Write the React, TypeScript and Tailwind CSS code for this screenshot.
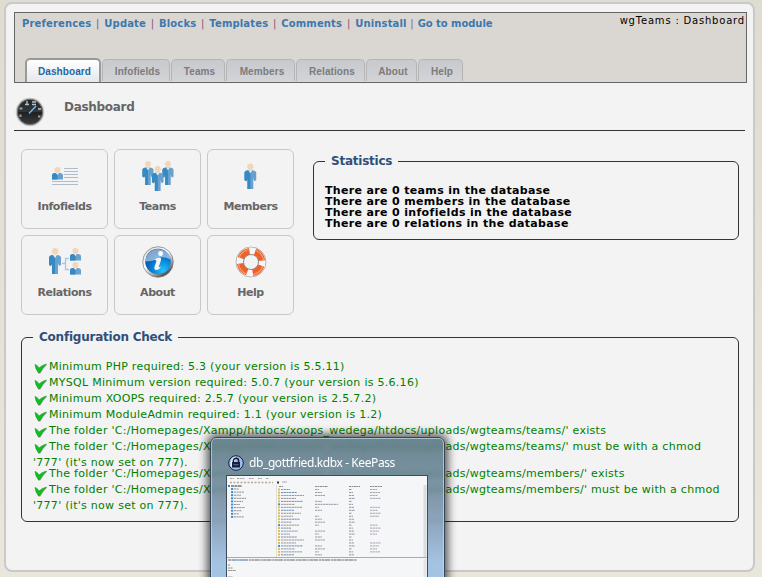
import { Fragment, type ReactNode } from "react";

const navLinks = ["Preferences", "Update", "Blocks", "Templates", "Comments", "Uninstall"];

const tabs = [
  { label: "Infofields", width: "w-[68px]" },
  { label: "Teams", width: "w-[54px]" },
  { label: "Members", width: "w-[69px]" },
  { label: "Relations", width: "w-[69px]" },
  { label: "About", width: "w-[51px]" },
  { label: "Help", width: "w-[45px]" },
];

function Person({ x, y, h = 26 }: { x: number; y: number; h?: number }) {
  return (
    <g transform={`translate(${x} ${y}) scale(${h / 26})`}>
      <path d="M1 9Q2 7 5 7H9Q12 7 13 9V17L11 18L10 15V26H4V15L3 18L1 17Z" fill="#69a0ce" />
      <path d="M1 9Q2 7 5 7L7 10V26H4V16L3 18L1 17Z" fill="#348ac1" />
      <circle cx="7" cy="3.3" r="3.2" fill="#f3d5b8" />
      <path d="M5 7H9L7 10Z" fill="#e4eef5" />
    </g>
  );
}

function Bust({ x, y }: { x: number; y: number }) {
  return (
    <g transform={`translate(${x} ${y})`}>
      <path d="M0 12.5V8.5Q0 6 3 6H8Q11 6 11 8.5V12.5Z" fill="#69a0ce" />
      <path d="M0 12.5V8.5Q0 6 3 6L5.5 8V12.5Z" fill="#348ac1" />
      <circle cx="5.5" cy="3" r="3" fill="#f3d5b8" />
      <path d="M4 6H7L5.5 8Z" fill="#e4eef5" />
    </g>
  );
}

function InfofieldsIcon() {
  return (
    <svg width="34" height="34" viewBox="0 0 34 34">
      <Bust x={4} y={7} />
      <path d="M16 8.5H30M16 11.5H30M16 14.5H30M16 17.5H30M4 21.5H30M4 24.5H30" stroke="#adbdce" />
    </svg>
  );
}

function TeamsIcon() {
  return (
    <svg width="34" height="34" viewBox="0 0 34 34">
      <Person x={0.5} y={1} h={24} />
      <Person x={20.5} y={1} h={24} />
      <Person x={10} y={6} h={25} />
    </svg>
  );
}

function MembersIcon() {
  return (
    <svg width="34" height="34" viewBox="0 0 34 34">
      <Person x={9.5} y={3.5} h={25.5} />
    </svg>
  );
}

function RelationsIcon() {
  return (
    <svg width="34" height="34" viewBox="0 0 34 34">
      <Person x={0} y={2} />
      <path d="M14 17.5H17.5M21 12.5H17.5V23.5H21" stroke="#a6c9e3" strokeWidth="1.3" fill="none" />
      <Bust x={22} y={2} />
      <Bust x={22} y={16} />
    </svg>
  );
}

function AboutIcon() {
  return (
    <svg width="34" height="34" viewBox="0 0 34 34">
      <defs>
        <linearGradient id="rim" x1="0" y1="0" x2="0.7" y2="1">
          <stop offset="0" stopColor="#d5d5d5" />
          <stop offset="0.5" stopColor="#ffffff" />
          <stop offset="0.8" stopColor="#9a9a9a" />
          <stop offset="1" stopColor="#3d3d3d" />
        </linearGradient>
        <radialGradient id="glass" cx="0.7" cy="0.85" r="0.9">
          <stop offset="0" stopColor="#20c4ff" />
          <stop offset="0.45" stopColor="#0a83d8" />
          <stop offset="1" stopColor="#083f93" />
        </radialGradient>
      </defs>
      <circle cx="17" cy="16" r="15.3" fill="url(#rim)" stroke="#777" strokeWidth="0.7" />
      <circle cx="17" cy="15.5" r="12.8" fill="url(#glass)" />
      <path d="M4.3 15.5A12.8 12.8 0 0 1 29.7 13.5Q22 9.5 17 12.5T4.3 15.5Z" fill="#ffffff" opacity="0.5" />
      <circle cx="19.6" cy="7.5" r="2.4" fill="#fff" />
      <path d="M13.5 13.7Q17 10.9 19.8 11.9Q20.6 12.5 19.6 15.5L17.7 21Q18.4 21.5 20 20.3Q18.5 24.1 15 24.1Q12.8 23.5 13.6 20.5L15.5 15Q15 14.3 13.5 13.7Z" fill="#f6f6f6" />
    </svg>
  );
}

function HelpIcon() {
  return (
    <svg width="34" height="34" viewBox="0 0 34 34" fill="none">
      <circle cx="17" cy="16" r="14.9" stroke="#96928e" strokeWidth="0.8" />
      <circle cx="17" cy="16" r="10.9" stroke="#f6f6f6" strokeWidth="7" />
      <circle cx="17" cy="16" r="10.9" stroke="#eb622d" strokeWidth="6.6" strokeDasharray="11.5 5.62" transform="rotate(20 17 16)" />
      <circle cx="17" cy="16" r="12.6" stroke="#ff9a6a" strokeWidth="1.2" strokeDasharray="13.3 6.49" transform="rotate(20 17 16)" />
      <circle cx="17" cy="16" r="7.5" stroke="#8a7a72" strokeWidth="0.9" />
    </svg>
  );
}

function GaugeIcon() {
  return (
    <svg className="shrink-0" width="30" height="30" viewBox="0 0 30 30">
      <defs>
        <linearGradient id="dial" x1="0" y1="0" x2="0" y2="1">
          <stop offset="0" stopColor="#20252a" />
          <stop offset="0.5" stopColor="#33373a" />
          <stop offset="0.52" stopColor="#202020" />
          <stop offset="1" stopColor="#3b3d3d" />
        </linearGradient>
      </defs>
      <circle cx="15" cy="15" r="14.3" fill="#c4c4c4" />
      <circle cx="15" cy="15" r="12.7" fill="url(#dial)" stroke="#747474" />
      <path d="M12 4V7.5M10 7.5H14M17 5H21M17 7.5H21" stroke="#b9bec0" strokeWidth="1.4" />
      <path d="M4.5 11.5H7.5M5.5 17.5V20M23 19.5H25.5M23 12H26" stroke="#9ca2a4" strokeWidth="2" />
      <path d="M14 16.5L21 9" stroke="#7dbdf0" strokeWidth="1.3" />
    </svg>
  );
}

function CheckIcon() {
  return (
    <svg className="mt-[3px] h-[12px] w-[14px] shrink-0" viewBox="0 0 14 12">
      <path d="M1.5 4L5 6.5Q9 3.4 13.2 2.6Q9 6 6.3 11.5L4.4 11.5Z" fill="#52644f" opacity="0.6" />
      <path d="M1 2.4L2.6 3.2Q4.2 4.2 5 6Q8 3 12.6 2Q8.4 5.6 5.6 10.6L4.2 10.6Q1.4 7 1 2.4Z" fill="#0cc41a" stroke="#158a1c" strokeWidth="0.5" />
    </svg>
  );
}

const cards: { label: string; icon: ReactNode }[] = [
  { label: "Infofields", icon: <InfofieldsIcon /> },
  { label: "Teams", icon: <TeamsIcon /> },
  { label: "Members", icon: <MembersIcon /> },
  { label: "Relations", icon: <RelationsIcon /> },
  { label: "About", icon: <AboutIcon /> },
  { label: "Help", icon: <HelpIcon /> },
];

function CheckRow({ children }: { children: string }) {
  return (
    <div className="flex h-4 items-start whitespace-nowrap">
      <span className="flex w-4 shrink-0 pl-px">
        <CheckIcon />
      </span>
      <span>{children}</span>
    </div>
  );
}

function Panel({ title, className, children }: { title: string; className: string; children: ReactNode }) {
  return (
    <fieldset className={`rounded-md border border-[#333] ${className}`}>
      <legend className="ml-[11px] h-4 px-[6px] text-[12px] leading-4 font-bold tracking-[-0.23px] text-[#2f4f7a]">{title}</legend>
      {children}
    </fieldset>
  );
}

const listRows = Array.from({ length: 23 }, (_, i) => i);

function Thumbnail() {
  return (
    <svg className="block" width="200" height="102" viewBox="0 0 200 102">
      <rect width="200" height="102" fill="#f5f6f7" />
      <path d="M3 2.5H7M10 2.5H18M22 2.5H27M31 2.5H35M39 2.5H42" stroke="#a4a4a4" strokeDasharray="2 .6" />
      <path d="M3 6.5H46" stroke="#b6aa96" strokeWidth="1.6" strokeDasharray="2 1.5" />
      <path d="M50 6.5H52" stroke="#333" strokeWidth="2" />
      <path d="M55 6H60" stroke="#aaa" />
      <path d="M1 10H3" stroke="#258be2" strokeWidth="2" />
      <path d="M4 10H15" stroke="#333" strokeDasharray="3 .5" />
      {listRows.slice(0, 10).map((i) => (
        <g key={i}>
          <rect x="4" y={12 + i * 3.1} width="2.2" height="2" fill="#3d8ed5" />
          <path d={`M7 ${13 + i * 3.1}h${5 + ((i * 5) % 8)}`} stroke="#8b8d94" strokeDasharray="2 .6" />
        </g>
      ))}
      <path d="M49.5 9V81" stroke="#dedede" />
      <path d="M52 10.5H56M88 10.5H101M122 10.5H133M143 10.5H155" stroke="#8c8c8c" strokeDasharray="2 .5" />
      {listRows.map((i) => {
        const y = 13.5 + i * 2.97;
        return (
          <g key={i} strokeDasharray="2.2 .5">
            <rect x="51" y={y - 1} width="2" height="2" fill={i % 7 === 5 ? "#4a91b0" : "#e2be56"} />
            <path d={`M54 ${y}h${9 + ((i * 7) % 15)}`} stroke={i % 3 === 1 ? "#718cb5" : "#9a9494"} />
            {i % 5 !== 3 && <path d={`M88 ${y}h${i === 5 ? 23 : 4 + ((i * 3) % 9)}`} stroke="#9d97a7" />}
            <path d={`M122 ${y}h${3 + (i % 4)}`} stroke="#9592a7" />
            {i % 6 < 4 && <path d={`M143 ${y}h${7 + ((i * 3) % 5)}`} stroke="#a9a3b0" />}
          </g>
        );
      })}
      <rect x="196.5" y="9" width="3" height="73" fill="#dadde0" />
      <path d="M0 81.5H200" stroke="#a7acb0" />
      <path d="M1 84H130" stroke="#62646b" strokeDasharray="3 .4 5 .8 2 .5" />
      <path d="M8 84H17" stroke="#7fb8e3" />
      <path d="M1 89H3M1 92H6M1 94.5H9M1 101H6" stroke="#909090" strokeDasharray="2 .4" />
      <rect x="196.5" y="83" width="3" height="19" fill="#e2e4e6" />
    </svg>
  );
}

function KeePassPreview() {
  return (
    <div className="absolute top-[437px] left-[210px] h-[150px] w-[235px] rounded-t-[6px] border border-[#34465a] bg-gradient-to-b from-[#5c7984]/90 via-[#718ba3]/85 via-45% to-[#a0c0e2]/95 to-85% shadow-[0_0_9px_3px_rgba(0,0,0,0.65),inset_0_0_0_1px_rgba(200,225,240,0.65)] backdrop-blur-[2px]">
      <div className="flex h-[37px] items-center pt-[13px] pl-[17px]">
        <svg className="shrink-0" width="16" height="16" viewBox="0 0 16 16">
          <circle cx="8" cy="8" r="7.3" fill="#9fbdf3" stroke="#162236" />
          <path d="M3 6Q4 2 8 1.8L6 10L3 12Q1.6 9 3 6Z" fill="#e8f0ff" />
          <path d="M5.4 8V5.8A2.6 2.6 0 0 1 10.6 5.8V8" fill="none" stroke="#111c33" strokeWidth="1.5" />
          <rect x="4" y="7" width="8" height="5.5" fill="#14213e" />
          <path d="M5.5 9.7H10.5" stroke="#7386a5" strokeWidth="0.8" />
        </svg>
        <span className="ml-[5px] font-['Noto_Sans','Open_Sans',sans-serif] text-[12px] leading-4 tracking-[-0.4px] whitespace-nowrap text-white">
          db_gottfried.kdbx - KeePass
        </span>
      </div>
      <div className="ml-[15px] w-[202px] border border-[#3b4b5c]">
        <Thumbnail />
      </div>
    </div>
  );
}

export default function App() {
  return (
    <div className="relative h-[577px] w-[762px] overflow-hidden bg-gradient-to-b from-[#dfddd1] to-[#e9e6db] px-1 pt-[2px] font-['DejaVu_Sans',Verdana,sans-serif]">
      <main className="h-[570px] w-[751px] rounded-lg border-2 border-[#c9c9c9] bg-[#f3f3f3] pt-2 pl-2">
        <header className="flex h-[71px] w-[733px] flex-col justify-between border border-[#666] bg-[#dad7d2]">
          <div className="flex justify-between">
            <nav className="flex pt-1 pl-[7px] text-[10px] leading-[14px] font-bold tracking-[0.15px] whitespace-pre text-[#3c78ae]">
              {navLinks.map((link) => (
                <Fragment key={link}>
                  <a>{link}</a>
                  <span className="w-[13px] text-center font-normal text-[#86557f] last:w-[11px]">|</span>
                </Fragment>
              ))}
            </nav>
            <a className="mr-auto pt-1 text-[10px] leading-[14px] font-bold tracking-[-0.05px] text-[#3c78ae]">Go to module</a>
            <span className="pt-px pr-px text-[10px] leading-[14px] tracking-[0.8px] text-black">wgTeams : Dashboard</span>
          </div>
          <div className="flex items-end gap-px pl-[10px] font-['Liberation_Sans',Arial,sans-serif] text-[10px] font-bold">
            <div className="h-[24px] w-[76px] rounded-t-[5px] border-2 border-b-0 border-[#999] bg-gradient-to-b from-white to-[#e5e7eb] pt-[4px] pl-[3px] text-center leading-[16px] tracking-[0.1px] text-[#1f66a3]">
              Dashboard
            </div>
            {tabs.map((tab) => (
              <div
                key={tab.label}
                className={`mb-px h-[22px] rounded-t-[5px] border border-b-0 border-[#b5b5b5] bg-gradient-to-b from-[#c8c9cd] to-[#d3d4d8] pt-[4px] pl-[3px] text-center leading-[16px] tracking-[0.1px] text-[#7b7b7e] ${tab.width}`}
              >
                {tab.label}
              </div>
            ))}
          </div>
        </header>
        <div className="flex h-[48px] w-[731px] border-b border-[#333] pt-[14px] pl-px">
          <GaugeIcon />
          <h1 className="pl-[19px] text-[12px] leading-5 font-bold tracking-[-0.3px] text-[#666]">Dashboard</h1>
        </div>
        <div className="flex gap-[19px] pt-[18px] pl-[7px]">
          <div className="grid grid-cols-[87px_87px_87px] gap-[6px]">
            {cards.map((card) => (
              <div key={card.label} className="flex h-20 flex-col items-center rounded-md border border-[#c8c8c8] pt-[10px]">
                {card.icon}
                <span className="mt-[5px] text-[11px] leading-4 font-bold tracking-[-0.45px] text-[#666]">{card.label}</span>
              </div>
            ))}
          </div>
          <Panel title="Statistics" className="mt-[4px] h-[87px] w-[426px]">
            <div className="pt-[16px] pl-[11px] text-[11px] leading-[11px] font-bold tracking-[0.34px] text-black">
              <p>There are 0 teams in the database</p>
              <p>There are 0 members in the database</p>
              <p>There are 0 infofields in the database</p>
              <p>There are 0 relations in the database</p>
            </div>
          </Panel>
        </div>
        <div className="pt-[14px] pl-[7px]">
          <Panel title="Configuration Check" className="h-[193px] w-[718px]">
            <div className="pt-[14px] pl-[11px] text-[11px] leading-4 tracking-[0.28px] whitespace-nowrap text-[#008000]">
              <CheckRow>Minimum PHP required: 5.3 (your version is 5.5.11)</CheckRow>
              <CheckRow>MYSQL Minimum version required: 5.0.7 (your version is 5.6.16)</CheckRow>
              <CheckRow>Minimum XOOPS required: 2.5.7 (your version is 2.5.7.2)</CheckRow>
              <CheckRow>Minimum ModuleAdmin required: 1.1 (your version is 1.2)</CheckRow>
              <CheckRow>The folder 'C:/Homepages/Xampp/htdocs/xoops_wedega/htdocs/uploads/wgteams/teams/' exists</CheckRow>
              <CheckRow>The folder 'C:/Homepages/Xampp/htdocs/xoops_wedega/htdocs/uploads/wgteams/teams/' must be with a chmod</CheckRow>
              <div className="h-[11px]">'777' (it's now set on 777).</div>
              <CheckRow>The folder 'C:/Homepages/Xampp/htdocs/xoops_wedega/htdocs/uploads/wgteams/members/' exists</CheckRow>
              <CheckRow>The folder 'C:/Homepages/Xampp/htdocs/xoops_wedega/htdocs/uploads/wgteams/members/' must be with a chmod</CheckRow>
              <div className="h-4">'777' (it's now set on 777).</div>
            </div>
          </Panel>
        </div>
      </main>
      <KeePassPreview />
    </div>
  );
}
